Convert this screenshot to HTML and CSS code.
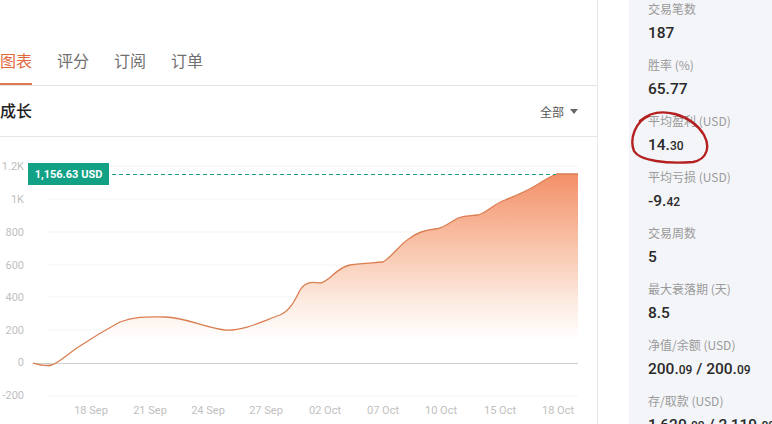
FILE: index.html
```html
<!DOCTYPE html>
<html lang="zh">
<head>
<meta charset="utf-8">
<link rel="stylesheet" href="styles.css">
</head>
<body>
<div class="page">
  <div class="main">
    <div class="tabs">
      <div class="tab active">图表</div>
      <div class="tab">评分</div>
      <div class="tab">订阅</div>
      <div class="tab">订单</div>
    </div>
    <div class="head">
      <div class="title">成长</div>
      <div class="filter">全部 <span class="caret"></span></div>
    </div>
    <svg class="chart" width="598" height="287" viewBox="0 137 598 287">
      <defs>
        <linearGradient id="fillg" x1="0" y1="174" x2="0" y2="340" gradientUnits="userSpaceOnUse">
          <stop offset="0" stop-color="#f39068"/>
          <stop offset="0.45" stop-color="#f9c6ad"/>
          <stop offset="0.8" stop-color="#fdeee6"/>
          <stop offset="1" stop-color="#ffffff"/>
        </linearGradient>
      </defs>
      <g class="grid">
        <line x1="48" y1="166" x2="578" y2="166"/>
        <line x1="48" y1="199" x2="578" y2="199"/>
        <line x1="48" y1="232" x2="578" y2="232"/>
        <line x1="48" y1="265" x2="578" y2="265"/>
        <line x1="48" y1="297" x2="578" y2="297"/>
        <line x1="48" y1="330" x2="578" y2="330"/>
        <line x1="48" y1="396" x2="578" y2="396"/>
      </g>
      <path class="area" d="M33,363 C40,365 48,366 52,365 C60,362 70,352 80,346 C95,336 105,330 120,322 C135,316 150,317 165,317 C185,317 205,328 225,330 C245,331 265,320 280,315 C290,311 295,300 300,290 C306,281 312,282 320,283 C330,282 335,268 350,265 C362,263 372,263 383,262 C393,256 400,244 410,238 C418,232 425,230 435,229 C445,228 450,222 458,218 C466,215 470,216 478,215 C488,212 495,203 505,200 C515,196 525,192 535,186 C545,180 550,176 557,174 L578,174 L578,363 L33,363 Z"/>
      <line class="zero" x1="33" y1="363.5" x2="578" y2="363.5"/>
      <path class="curve" d="M33,363 C40,365 48,366 52,365 C60,362 70,352 80,346 C95,336 105,330 120,322 C135,316 150,317 165,317 C185,317 205,328 225,330 C245,331 265,320 280,315 C290,311 295,300 300,290 C306,281 312,282 320,283 C330,282 335,268 350,265 C362,263 372,263 383,262 C393,256 400,244 410,238 C418,232 425,230 435,229 C445,228 450,222 458,218 C466,215 470,216 478,215 C488,212 495,203 505,200 C515,196 525,192 535,186 C545,180 550,176 557,174 L578,174"/>
      <line class="dash" x1="112" y1="174.5" x2="556" y2="174.5"/>
      <g class="ylab">
        <text x="24" y="170">1.2K</text>
        <text x="24" y="203">1K</text>
        <text x="24" y="236">800</text>
        <text x="24" y="269">600</text>
        <text x="24" y="301">400</text>
        <text x="24" y="334">200</text>
        <text x="24" y="366">0</text>
        <text x="24" y="399">-200</text>
      </g>
      <g class="xlab">
        <text x="91" y="414">18 Sep</text>
        <text x="150" y="414">21 Sep</text>
        <text x="208" y="414">24 Sep</text>
        <text x="266" y="414">27 Sep</text>
        <text x="325" y="414">02 Oct</text>
        <text x="383" y="414">07 Oct</text>
        <text x="441" y="414">10 Oct</text>
        <text x="500" y="414">15 Oct</text>
        <text x="558" y="414">18 Oct</text>
      </g>
      <rect class="tagbox" x="28" y="163" width="81" height="22"/>
      <text class="tagtxt" x="68.5" y="178">1,156.63 USD</text>
    </svg>
  </div>
  <div class="spacer"></div>
  <div class="side">
    <div class="stat"><div class="lbl">交易笔数</div><div class="val">187</div></div>
    <div class="stat"><div class="lbl">胜率 (%)</div><div class="val">65.77</div></div>
    <div class="stat"><div class="lbl">平均盈利 (USD)</div><div class="val">14.<small>30</small></div></div>
    <div class="stat"><div class="lbl">平均亏损 (USD)</div><div class="val">-9.<small>42</small></div></div>
    <div class="stat"><div class="lbl">交易周数</div><div class="val">5</div></div>
    <div class="stat"><div class="lbl">最大衰落期 (天)</div><div class="val">8.5</div></div>
    <div class="stat"><div class="lbl">净值/余额 (USD)</div><div class="val">200.<small>09</small> / 200.<small>09</small></div></div>
    <div class="stat"><div class="lbl">存/取款 (USD)</div><div class="val">1,620.<small>00</small> / 2,119.<small>00</small></div></div>
    <svg class="mark" width="90" height="60" viewBox="628 108 90 60">
      <path d="M650,116 C637,121 630,138 635,151 C641,161 668,164 694,162 C709,159 711,146 705,135 C699,125 690,118 676,114 C664,111 651,112 641,121"/>
    </svg>
  </div>
</div>
</body>
</html>
```

FILE: styles.css
```css
* { box-sizing: border-box; }
html, body { margin: 0; padding: 0; background: #ffffff; }
body {
  width: 772px;
  height: 424px;
  overflow: hidden;
  font-family: "Noto Sans CJK SC", "Noto Sans", sans-serif;
}
.page {
  display: flex;
  height: 424px;
}
.main {
  width: 598px;
  flex: none;
  border-right: 1px solid #e8e8e8;
  display: flex;
  flex-direction: column;
}
.tabs {
  display: flex;
  gap: 25px;
  height: 86px;
  align-items: flex-end;
  border-bottom: 1px solid #e3e3e3;
}
.tab {
  font-size: 16px;
  line-height: 24px;
  color: #707070;
  padding-bottom: 11px;
  border-bottom: 2px solid transparent;
}
.tab.active {
  color: #e2693c;
  border-bottom-color: #e07a4f;
}
.head {
  height: 51px;
  display: flex;
  align-items: center;
  justify-content: space-between;
  padding-right: 19px;
  border-bottom: 1px solid #e6e6e6;
}
.title {
  font-size: 16px;
  font-weight: 500;
  color: #222222;
  margin-top: -2px;
}
.filter {
  font-size: 12px;
  color: #555555;
  display: flex;
  align-items: center;
  gap: 6px;
}
.caret {
  width: 0;
  height: 0;
  border-left: 4px solid transparent;
  border-right: 4px solid transparent;
  border-top: 5px solid #666666;
}
.chart { display: block; }
.grid line { stroke: #f4f4f4; stroke-width: 1; }
.zero { stroke: #cfcfcf; stroke-width: 1; }
.area { fill: url(#fillg); }
.curve { fill: none; stroke: #da7e52; stroke-width: 1.3; }
.dash { stroke: #1f9e84; stroke-width: 1; stroke-dasharray: 4 3; }
.ylab text {
  font-family: Roboto, "Liberation Sans", sans-serif;
  font-size: 11px;
  fill: #c0c0c0;
  text-anchor: end;
}
.xlab text {
  font-family: Roboto, "Liberation Sans", sans-serif;
  font-size: 11px;
  fill: #c0c0c0;
  text-anchor: middle;
}
.tagbox { fill: #13a186; }
.tagtxt {
  font-family: Roboto, "Liberation Sans", sans-serif;
  font-size: 11px;
  font-weight: 700;
  fill: #ffffff;
  text-anchor: middle;
}
.spacer { width: 31px; flex: none; background: #ffffff; }
.side {
  flex: 1;
  background: #f4f5f8;
  padding: 1px 0 0 19px;
  position: relative;
}
.stat { height: 56px; }
.lbl {
  font-size: 12px;
  line-height: 16px;
  color: #9a9a9a;
  white-space: nowrap;
}
.val {
  margin-top: 5px;
  font-family: Roboto, "Liberation Sans", sans-serif;
  font-size: 15.5px;
  font-weight: 500;
  line-height: 22px;
  color: #2a2a2a;
  white-space: nowrap;
}
.val small { font-size: 12px; font-weight: 500; }
.mark {
  position: absolute;
  left: -2px;
  top: 108px;
}
.mark path {
  fill: none;
  stroke: #b3201f;
  stroke-width: 2.4;
  stroke-linecap: round;
}
```
